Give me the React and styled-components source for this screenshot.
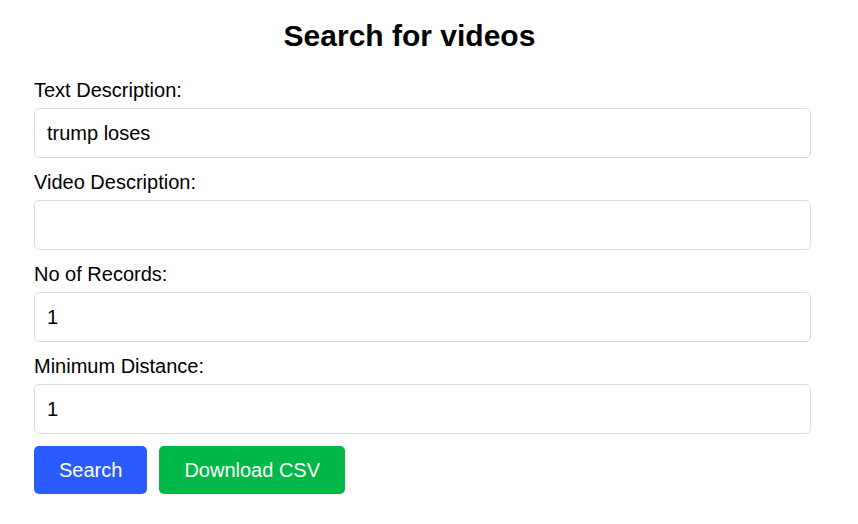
import React, { useState } from 'react'
import styled, { createGlobalStyle } from 'styled-components'

const GlobalStyle = createGlobalStyle`
    body {
        margin: 0;
        background: #fff;
        font-family: "Liberation Sans", Arial, sans-serif;
        color: #000;
    }
`

const SearchPage = () => {
    const [text, setText] = useState('trump loses')
    const [video, setVideo] = useState('')
    const [records, setRecords] = useState('1')
    const [distance, setDistance] = useState('1')

    return (
        <>
            <GlobalStyle />
            <Wrapper>
                <Title>Search for videos</Title>
                <Field>
                    <Label>Text Description:</Label>
                    <Input value={text} onChange={(e) => setText(e.target.value)} />
                </Field>
                <Field>
                    <Label>Video Description:</Label>
                    <Input value={video} onChange={(e) => setVideo(e.target.value)} />
                </Field>
                <Field>
                    <Label>No of Records:</Label>
                    <Input value={records} onChange={(e) => setRecords(e.target.value)} />
                </Field>
                <Field>
                    <Label>Minimum Distance:</Label>
                    <Input value={distance} onChange={(e) => setDistance(e.target.value)} />
                </Field>
                <Actions>
                    <Button $color="#2a5bff">Search</Button>
                    <Button $color="#00b847">Download CSV</Button>
                </Actions>
            </Wrapper>
        </>
    )
}

export default SearchPage

const Wrapper = styled.div`
    width: 751px;
    padding: 19px 0 0 34px;
`

const Title = styled.h1`
    margin: 0 0 26px;
    font-size: 30px;
    line-height: 34px;
    font-weight: 700;
    text-align: center;
`

const Field = styled.div`
    display: flex;
    flex-direction: column;
    margin-bottom: 13px;
`

const Label = styled.label`
    display: block;
    font-size: 20px;
    line-height: 23px;
    margin-bottom: 6px;
`

const Input = styled.input`
    box-sizing: content-box;
    width: 100%;
    height: 48px;
    padding: 0 12px;
    border: 1px solid #dcdcdc;
    border-radius: 5px;
    font-family: "Liberation Sans", Arial, sans-serif;
    font-size: 20px;
    color: #000;
    outline: none;
`

const Actions = styled.div`
    display: flex;
    gap: 12px;
    margin-top: -1px;
`

const Button = styled.button`
    height: 48px;
    padding: 0 25px;
    border: none;
    border-radius: 5px;
    background-color: ${(p) => p.$color};
    color: #fff;
    font-family: "Liberation Sans", Arial, sans-serif;
    font-size: 20px;
    cursor: pointer;
`
